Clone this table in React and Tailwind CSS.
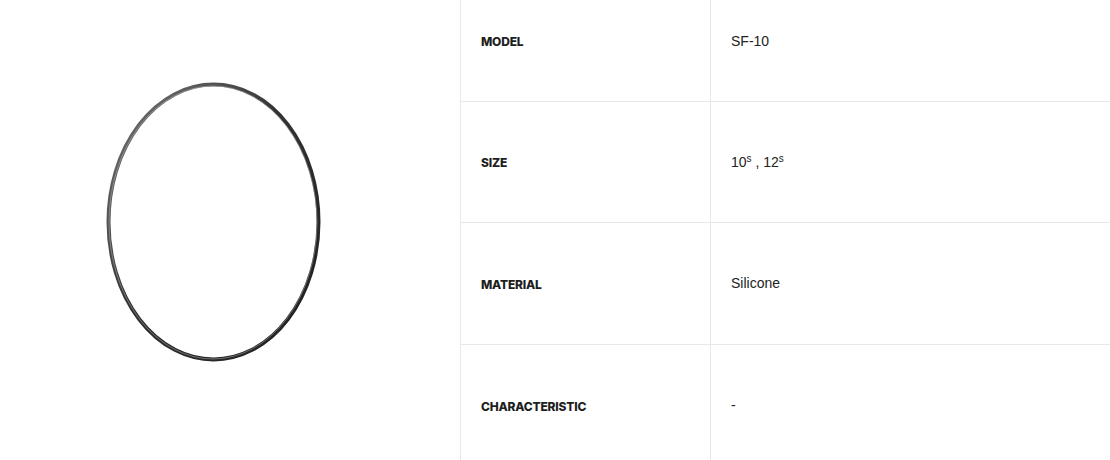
const SPECS = [
  { label: 'MODEL', value: 'SF-10', h: 'h-[121px]' },
  { label: 'SIZE', value: <>10<sup className="text-[10px]">s</sup> , 12<sup className="text-[10px]">s</sup></>, h: 'h-[121px]' },
  { label: 'MATERIAL', value: 'Silicone', h: 'h-[122px]' },
  { label: 'CHARACTERISTIC', value: '-', h: 'h-[122px]' },
]

// o-ring drawing
const Ring = () => (
  <svg width="460" height="460" viewBox="0 0 460 460" fill="none">
    <defs>
      <linearGradient id="ring" x1="0" y1="0" x2="1" y2="1">
        <stop offset="0" stopColor="#7a7a7a" />
        <stop offset="0.45" stopColor="#333" />
        <stop offset="1" stopColor="#1e1e1e" />
      </linearGradient>
    </defs>
    <ellipse cx="213.5" cy="222" rx="105" ry="137.5" stroke="url(#ring)" strokeWidth="4" />
    <ellipse cx="213" cy="222.5" rx="104" ry="136.5" stroke="#c4c4c4" strokeWidth="1" opacity="0.45" />
  </svg>
)

export default function App() {
  return (
    <div className="w-[1110px] h-[460px] overflow-hidden bg-white flex">
      <div className="w-[460px] shrink-0">
        <Ring />
      </div>
      <div className="flex-1 border-l border-[#e8e8e8] -mt-[19px]">
        {SPECS.map(s => (
          <div key={s.label} className={`${s.h} grid grid-cols-[250px_1fr] border-b border-[#e8e8e8]`}>
            <div className="flex items-center pl-[20px] pt-[2px] border-r border-[#e8e8e8] text-[12px] font-extrabold text-[#1e1e1e] tracking-[-0.2px] font-['Inter',sans-serif]">
              {s.label}
            </div>
            <div className="flex items-center pl-[20px] text-[14px] text-[#222] font-['Liberation_Sans',Arial,sans-serif]">
              <span>{s.value}</span>
            </div>
          </div>
        ))}
      </div>
    </div>
  )
}
